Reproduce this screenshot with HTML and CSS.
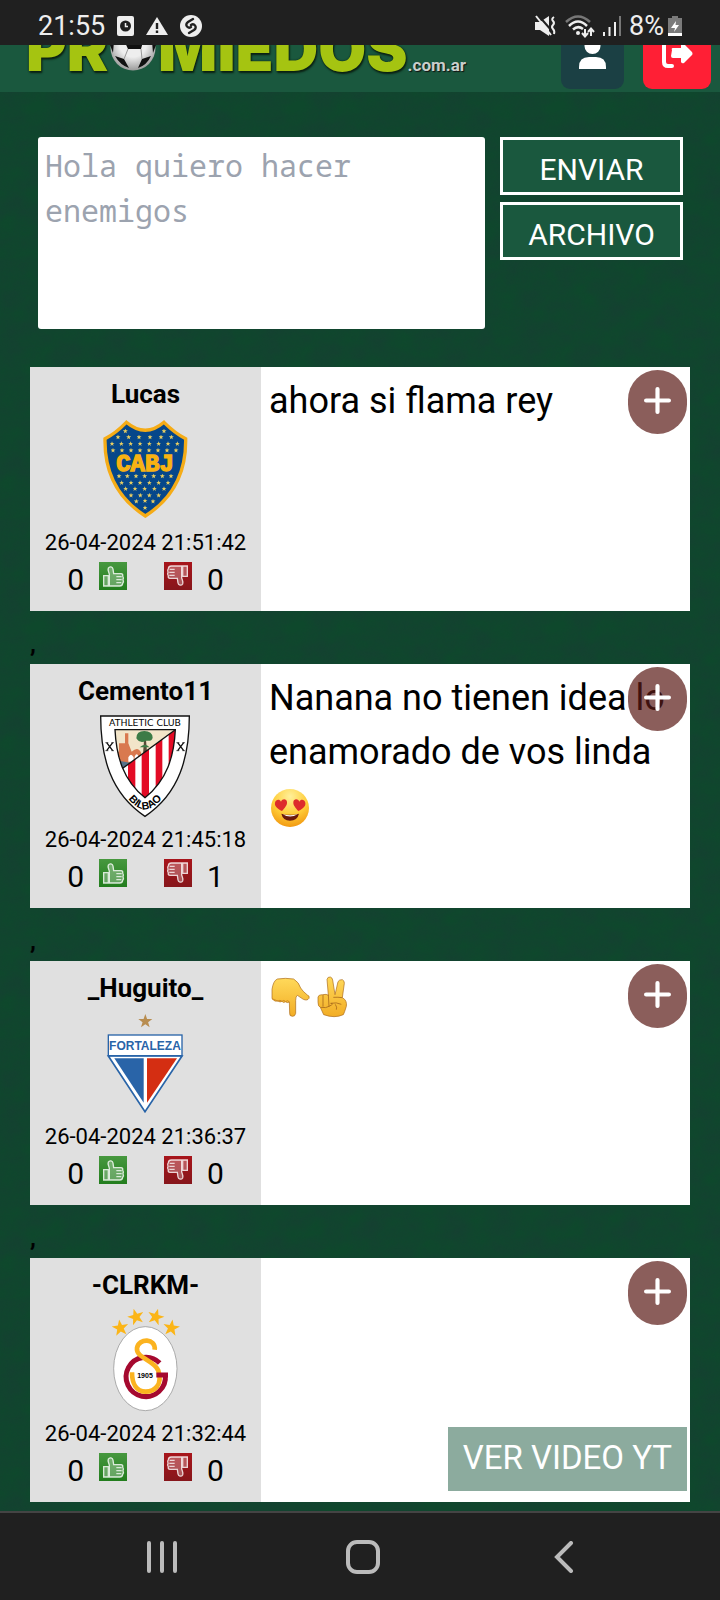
FILE: index.html
```html
<!DOCTYPE html>
<html lang="es">
<head>
<meta charset="utf-8">
<meta name="viewport" content="width=device-width, initial-scale=1">
<title>Promiedos - Chat</title>
<link rel="stylesheet" href="styles.css">
</head>
<body>
<svg class="defs" aria-hidden="true">
  <defs>
    <linearGradient id="green" x1="0" y1="0" x2="0" y2="1"><stop offset="0" stop-color="#47983f"/><stop offset="1" stop-color="#227d1d"/></linearGradient>
    <linearGradient id="red" x1="0" y1="0" x2="0" y2="1"><stop offset="0" stop-color="#a8151b"/><stop offset="1" stop-color="#86161b"/></linearGradient>
    <radialGradient id="face" cx=".5" cy=".2" r=".85"><stop offset="0" stop-color="#fff09a"/><stop offset=".55" stop-color="#ffcd38"/><stop offset="1" stop-color="#f0920c"/></radialGradient>
    <linearGradient id="skin" x1="0" y1="0" x2="0" y2="1"><stop offset="0" stop-color="#ffd95a"/><stop offset="1" stop-color="#f2ad25"/></linearGradient>
    <marker id="dot" viewBox="-10 -10 20 20" markerWidth="15" markerHeight="15" markerUnits="userSpaceOnUse"><path d="M0-10L2.500-3H10L4 1.500L6 9L0 4.500L-6 9L-4 1.500L-10-3H-2.500Z" fill="#e9cf62"/></marker>
  </defs>
  <symbol id="star" viewBox="-10 -10 20 20"><path d="M0-10L2.400-3.200H9.600L3.800 1.200L5.900 8.100L0 4L-5.900 8.100L-3.800 1.200L-9.600-3.200H-2.400Z"/></symbol>
  <symbol id="plus" viewBox="0 0 26 26"><path d="M13 2V24M2 13H24" fill="none" stroke="#fff" stroke-width="4" stroke-linecap="round"/></symbol>
  <symbol id="hand" viewBox="0 0 84 84">
    <path d="M14 41H28V72H14ZM31 41C33 33 24 27 28 18C32 12 41 14 42 21L44 35H66Q73 36 71 42Q75 48 72 53Q75 59 71 64Q70 72 62 72H31Z" fill="#fff" fill-opacity=".28" stroke="#fff" stroke-opacity=".8" stroke-width="4"/>
    <path d="M52 44H68M52 53H68M52 62H67" stroke="#fff" stroke-opacity=".75" stroke-width="4"/>
  </symbol>
  <symbol id="like" viewBox="0 0 84 84"><rect width="84" height="84" fill="url(#green)"/><use href="#hand"/></symbol>
  <symbol id="dislike" viewBox="0 0 84 84"><rect width="84" height="84" fill="url(#red)"/><use href="#hand" transform="rotate(180 42 42)"/></symbol>
</svg>

<div class="statusbar">
  <div class="status-group">
    <span class="clock">21:55</span>
    <svg width="17" height="20" viewBox="0 0 17 20"><rect width="17" height="20" rx="2" fill="#eee"/><circle cx="8.500" cy="10" r="5.500" fill="#202020"/><path d="M8.500 7V10.500H11" stroke="#eee" stroke-width="1.500" fill="none"/></svg>
    <svg width="22" height="20" viewBox="0 0 22 20"><path d="M11 1L22 19H0Z" fill="#eee"/><path d="M11 7V13M11 14.500V17" stroke="#202020" stroke-width="2.400"/></svg>
    <svg width="22" height="22" viewBox="0 0 22 22"><circle cx="11" cy="11" r="11" fill="#eee"/><path d="M13 4L8 7C4 10 8 14 11 12M9 18L14 15C18 12 14 8 11 10" fill="none" stroke="#202020" stroke-width="2.400" stroke-linecap="round"/></svg>
  </div>
  <div class="status-group status-right">
    <svg width="22" height="22" viewBox="0 0 22 22"><path d="M0 7H5L14 1V21L5 15H0Z" fill="#eee"/><path d="M3 0L17 16" stroke="#202020" stroke-width="2"/><path d="M1 1L16 20" stroke="#eee" stroke-width="2"/><path d="M19 2Q16 4 18 6T18 10T18 14T19 19" fill="none" stroke="#eee" stroke-width="2"/></svg>
    <svg width="30" height="23" viewBox="0 0 30 23"><path d="M1 7Q13-4 25 7" fill="none" stroke="#777" stroke-width="2.500"/><path d="M4 11Q13 2 22 11M8 14.500Q13 10 18 14" fill="none" stroke="#eee" stroke-width="2.500"/><circle cx="13" cy="18" r="2" fill="#eee"/><path d="M20 14V21M17 18L20 21.500L23 18M26 21V14M23 17L26 13.500L29 17" fill="none" stroke="#eee" stroke-width="2"/></svg>
    <svg width="18" height="20" viewBox="0 0 18 20"><path d="M1 16V20M6.500 11V20M12 6V20" stroke="#eee" stroke-width="2"/><path d="M17 0V20" stroke="#777" stroke-width="2"/></svg>
    <span class="battery">8%</span>
    <svg width="14" height="20" viewBox="0 0 14 20"><path d="M4 0H10V2H14V20H0V2H4Z" fill="#7b7b7b"/><path d="M0 17H14V20H0ZM8 5L3 12H7L6 16L11 9H7.500Z" fill="#fff"/></svg>
  </div>
</div>

<header class="header">
  <a class="logo" href="#" aria-label="Promiedos.com.ar">
    <span class="logo-word">PR</span>
    <svg class="ball" viewBox="0 0 46 46"><defs><radialGradient id="ballg" cx=".5" cy=".4" r=".6"><stop offset=".5" stop-color="#eee"/><stop offset="1" stop-color="#9a9a9a"/></radialGradient></defs><circle cx="23" cy="23" r="22.500" fill="url(#ballg)"/><path d="M13 13L23 8L34 13L31 24H18ZM5 31L14 34L19 43Q10 40 5 31ZM41 31L32 34L28 43Q37 40 41 31ZM0 20L4 16L3 28ZM46 20L42 16L43 28Z" fill="#111"/><path d="M18 24L14 34M31 24L32 34M4 16L13 13M42 16L34 13" stroke="#999"/></svg>
    <span class="logo-word">MIEDOS</span>
    <span class="logo-tld">.com.ar</span>
  </a>
  <div class="header-actions">
    <button class="icon-button user" aria-label="Usuario"><svg width="27" height="34" viewBox="0 0 27 34"><circle cx="13.500" cy="11" r="8" fill="#fff"/><path d="M0 34V32Q0 22 10 22H17Q27 22 27 32V34Z" fill="#fff"/></svg></button>
    <button class="icon-button logout" aria-label="Salir"><svg width="32" height="34" viewBox="0 0 32 34"><path d="M12 6H8Q3 6 3 11V27Q3 31 7 31H11" fill="none" stroke="#fff" stroke-width="4" stroke-linecap="round"/><path d="M11 15Q10 13 12 13H20V9Q21 7 23 9L31 17Q32 19 31 20L23 28Q21 29 20 27V23H12Q10 23 10 21Z" fill="#fff"/></svg></button>
  </div>
</header>

<main class="main">
  <form class="composer">
    <textarea class="message" aria-label="Mensaje" placeholder="Hola quiero hacer enemigos"></textarea>
    <div class="composer-actions">
      <button class="button" type="button">ENVIAR</button>
      <button class="button" type="button">ARCHIVO</button>
    </div>
  </form>

  <article class="post">
    <div class="author">
      <h2 class="name">Lucas</h2>
      <svg class="badge" viewBox="229 171 300 312" role="img" aria-label="Boca Juniors">
        <path d="M320 187Q377 235 433 187Q466 220 498 236C500 345 455 418 377 468C299 418 254 345 256 236Q288 220 320 187Z" fill="#06478a" stroke="#f5ac17" stroke-width="10"/>
        <g fill="none"><path marker-start="url(#dot)" marker-mid="url(#dot)" marker-end="url(#dot)" d="M317 213L433 213L455 231L424 231L391 231L358 231L327 231L295 231L277 251L305 251L333 251L361 251L389 251L417 251L445 251L473 251L469 271L442 271L415 271L388 271L361 271L334 271L307 271L280 271M298 348L323 348L349 348L375 348L402 348L428 348L454 348L445 368L417 368L389 368L361 368L334 368L306 368L318 386L346 386L375 386L404 386L433 386L417 406L389 406L362 406L334 406L350 424L376 422L400 424L376 443"/></g>
        <text x="376" y="333" text-anchor="middle" class="boca">CABJ</text>
      </svg>
      <time class="date">26-04-2024 21:51:42</time>
      <div class="votes">
        <div class="vote"><span>0</span><button aria-label="Me gusta"><svg width="28" height="28"><use href="#like"/></svg></button></div>
        <div class="vote"><button aria-label="No me gusta"><svg width="28" height="28"><use href="#dislike"/></svg></button><span>0</span></div>
      </div>
    </div>
    <p class="text">ahora si flama rey</p>
    <button class="more" aria-label="Más"><svg width="27" height="27"><use href="#plus"/></svg></button>
  </article>
  <div class="separator">,</div>

  <article class="post">
    <div class="author">
      <h2 class="name">Cemento11</h2>
      <svg class="badge" viewBox="229 162 300 312" role="img" aria-label="Athletic Club Bilbao">
        <defs><clipPath id="inner"><path d="M286 209H467C463 290 442 360 376 413C310 360 290 290 286 209Z"/></clipPath><path id="arc" d="M308 388Q340 446 376 448Q412 446 446 388"/></defs>
        <path d="M243 168H509C509 290 480 400 376 469C272 400 243 290 243 168Z" fill="#fff" stroke="#111" stroke-width="4"/>
        <g clip-path="url(#inner)">
          <path d="M280 200H480V420H280Z" fill="#f2e5c9"/>
          <path d="M290 275H298V250H316V220H326V250L336 275Q355 258 364 278V310H290Z" fill="#d9794f"/>
          <path d="M326 305V292Q334 276 342 292V305ZM345 300V290Q351 276 357 290V300Z" fill="#fff"/>
          <path d="M285 300L330 308L310 330H285Z" fill="#56728a"/>
          <path d="M370 285L373 240H379L382 275Z" fill="#574a38"/>
          <path d="M350 235Q350 213 374 213Q398 213 399 233Q396 245 380 242Q360 252 350 235ZM360 262Q376 246 390 262Z" fill="#3c7b46"/>
          <path d="M305 328L470 207V420H305Z" fill="#fff"/>
          <path d="M325 314L347 298V420H325ZM366 284L388 267V420H366ZM408 253L428 238V420H408ZM447 224L469 208V420H447Z" fill="#e30b25"/>
          <path d="M305 328L470 207" stroke="#111" stroke-width="4"/>
        </g>
        <path d="M286 209H467C463 290 442 360 376 413C310 360 290 290 286 209Z" fill="none" stroke="#111" stroke-width="4"/>
        <text x="376" y="198" text-anchor="middle" class="bilbao-top">ATHLETIC CLUB</text>
        <text class="bilbao-name"><textPath href="#arc" startOffset="50%" text-anchor="middle">BILBAO</textPath></text>
        <path d="M261 248L279 272M279 248L261 272M474 248L492 272M492 248L474 272" stroke="#111" stroke-width="4"/>
        <path d="M257 248H266M275 248H283M257 272H266M275 272H283M470 248H479M488 248H496M470 272H479M488 272H496" stroke="#111" stroke-width="2"/>
      </svg>
      <time class="date">26-04-2024 21:45:18</time>
      <div class="votes">
        <div class="vote"><span>0</span><button aria-label="Me gusta"><svg width="28" height="28"><use href="#like"/></svg></button></div>
        <div class="vote"><button aria-label="No me gusta"><svg width="28" height="28"><use href="#dislike"/></svg></button><span>1</span></div>
      </div>
    </div>
    <p class="text">Nanana no tienen idea lo enamorado de vos linda <svg class="emoji" viewBox="27 407 126 126" role="img" aria-label="😍"><circle cx="90" cy="470" r="57" fill="url(#face)"/><path d="M64 487Q90 494 117 487Q112 508 90 508Q69 508 64 487Z" fill="#6b1a0c"/><path d="M68 489Q90 495 113 489Q90 502 68 489Z" fill="#fff"/><path id="heart" d="M66 479C52 472 43 464 45 454C48 443 59 443 63 451C67 441 80 442 81 452C82 462 74 470 66 479Z" fill="#dd2c2c"/><use href="#heart" transform="translate(181 0) scale(-1 1)"/></svg></p>
    <button class="more" aria-label="Más"><svg width="27" height="27"><use href="#plus"/></svg></button>
  </article>
  <div class="separator">,</div>

  <article class="post">
    <div class="author">
      <h2 class="name">_Huguito_</h2>
      <svg class="badge" viewBox="229 180 300 312" role="img" aria-label="Fortaleza">
        <use href="#star" x="355" y="189" width="44" height="44" fill="#b88d50"/>
        <path d="M266 315H487L376 482Z" fill="#fff" stroke="#2964a8" stroke-width="5"/>
        <rect x="266" y="252" width="221" height="62" fill="#fff" stroke="#2964a8" stroke-width="4"/>
        <path d="M284 322H372V455Z" fill="#2964a8"/><path d="M382 322H472L382 455Z" fill="#d42e12"/>
        <text x="376" y="297" text-anchor="middle" class="fortaleza">FORTALEZA</text>
      </svg>
      <time class="date">26-04-2024 21:36:37</time>
      <div class="votes">
        <div class="vote"><span>0</span><button aria-label="Me gusta"><svg width="28" height="28"><use href="#like"/></svg></button></div>
        <div class="vote"><button aria-label="No me gusta"><svg width="28" height="28"><use href="#dislike"/></svg></button><span>0</span></div>
      </div>
    </div>
    <p class="text"><svg class="emoji" viewBox="27 42 126 126" role="img" aria-label="👇"><path d="M36 110V82Q40 56 52 51Q76 47 101 51Q117 61 122 78Q128 88 142 99Q150 102 147 109Q142 117 130 112L112 100Q107 103 107 115V154Q105 164 97 163Q88 163 89 153L88 120Q81 124 77 119Q70 124 66 118Q60 122 54 117Q45 121 36 110Z" fill="url(#skin)" stroke="#a96818" stroke-width="2"/><path d="M36 110Q45 114 54 117Q60 112 66 118Q72 112 77 119Q83 112 88 120" fill="none" stroke="#d08d27" stroke-width="3"/></svg><svg class="emoji" viewBox="153 42 126 126" role="img" aria-label="✌"><path d="M205 100L201 52Q203 44 211 45Q217 47 218 54L225 98L234 59Q238 52 247 53Q254 57 253 64L247 107Q262 115 259 133Q253 153 250 158Q224 170 191 158L181 136Q174 134 174 121V105Q176 97 188 98Q200 95 205 100Z" fill="url(#skin)" stroke="#a96818" stroke-width="2"/><path d="M189 99V134M205 98L207 134M181 136Q200 139 207 133Q224 125 213 124M220 106Q234 105 247 107M211 124Q230 120 244 127M226 127Q232 136 229 143" fill="none" stroke="#aa6b1c" stroke-width="2.500"/></svg></p>
    <button class="more" aria-label="Más"><svg width="27" height="27"><use href="#plus"/></svg></button>
  </article>
  <div class="separator">,</div>

  <article class="post">
    <div class="author">
      <h2 class="name">-CLRKM-</h2>
      <svg class="badge" viewBox="227 174 300 312" role="img" aria-label="Galatasaray">
        <g fill="#fbb517"><use href="#star" x="-26" y="-26" width="52" height="52" transform="translate(300 234) rotate(-8)"/><use href="#star" x="-26" y="-26" width="52" height="52" transform="translate(347 201) rotate(-16)"/><use href="#star" x="-26" y="-26" width="52" height="52" transform="translate(406 201) rotate(16)"/><use href="#star" x="-26" y="-26" width="52" height="52" transform="translate(453 234) rotate(8)"/></g>
        <ellipse cx="375" cy="356" rx="95" ry="126" fill="#fff" stroke="#888" stroke-width="2"/>
        <path d="M418 339A59 59 0 1 0 435 375" fill="none" stroke="#a5092f" stroke-width="15"/>
        <path d="M403 299C407 264 356 263 350 294C346 325 402 329 414 362C428 405 402 425 376 425C348 425 335 400 335 367" fill="none" stroke="#fbb320" stroke-width="14"/>
        <path d="M408 375H443" stroke="#a5092f" stroke-width="15"/>
        <text x="374" y="383" text-anchor="middle" class="gala">1905</text>
      </svg>
      <time class="date">26-04-2024 21:32:44</time>
      <div class="votes">
        <div class="vote"><span>0</span><button aria-label="Me gusta"><svg width="28" height="28"><use href="#like"/></svg></button></div>
        <div class="vote"><button aria-label="No me gusta"><svg width="28" height="28"><use href="#dislike"/></svg></button><span>0</span></div>
      </div>
    </div>
    <p class="text"></p>
    <button class="more" aria-label="Más"><svg width="27" height="27"><use href="#plus"/></svg></button>
    <button class="video">VER VIDEO YT</button>
  </article>
</main>

<nav class="navbar" aria-label="Sistema">
  <button aria-label="Recientes"><svg width="30" height="32" viewBox="0 0 30 32"><path d="M2 2V30M15 2V30M28 2V30" stroke="#bbb" stroke-width="4" stroke-linecap="round"/></svg></button>
  <button aria-label="Inicio"><svg width="34" height="34" viewBox="0 0 34 34"><rect x="2" y="2" width="30" height="30" rx="9" fill="none" stroke="#bbb" stroke-width="4"/></svg></button>
  <button aria-label="Atrás"><svg width="20" height="32" viewBox="0 0 20 32"><path d="M17 2L3 16L17 30" fill="none" stroke="#bbb" stroke-width="4" stroke-linecap="round"/></svg></button>
</nav>
</body>
</html>
```
FILE: styles.css
```css
* {
  box-sizing: border-box;
}

body {
  margin: 0;
  min-height: 100vh;
  display: flex;
  flex-direction: column;
  font-family: Roboto, "Liberation Sans", sans-serif;
  color: #000;
  background-color: #0e482c;
  background-image: url("data:image/svg+xml,%3Csvg xmlns='http://www.w3.org/2000/svg' width='260' height='260'%3E%3Cfilter id='n' x='0' y='0' width='1' height='1' color-interpolation-filters='sRGB'%3E%3CfeTurbulence type='fractalNoise' baseFrequency='.04 .05' numOctaves='4' stitchTiles='stitch'/%3E%3CfeColorMatrix values='0 0 0 0 .09 0 0 0 0 .24 0 0 0 0 .2 1 0 0 0 -.2'/%3E%3C/filter%3E%3Crect width='260' height='260' filter='url(%23n)'/%3E%3C/svg%3E");
}

button {
  padding: 0;
  border: 0;
  background: none;
  font: inherit;
  color: inherit;
}

.defs {
  position: absolute;
  width: 0;
  height: 0;
}

.statusbar {
  display: flex;
  justify-content: space-between;
  align-items: center;
  height: 45px;
  padding: 7px 38px 0;
  background: #202020;
  color: #eee;
  font-size: 27px;
}

.status-group {
  display: flex;
  align-items: center;
  gap: 12px;
}

.status-right {
  gap: 8px;
}

.battery {
  margin-right: -4px;
}

.header {
  display: flex;
  justify-content: space-between;
  align-items: flex-end;
  height: 47px;
  padding: 0 9px 3px 26px;
  overflow: hidden;
  background: #1a583e;
}

.logo {
  display: flex;
  align-items: baseline;
  padding-bottom: 14px;
  text-decoration: none;
}

.logo-word {
  font: 900 62px/44px Inter, sans-serif;
  color: #a5c411;
  text-shadow: 1px 2px 2px #0a2012, 0 0 2px #0a2012;
}

.ball {
  width: 46px;
  height: 46px;
  margin: 0 2px;
}

.logo-tld {
  font-size: 17px;
  font-weight: 700;
  color: #c9cfcc;
  text-shadow: 1px 1px 1px #111;
}

.header-actions {
  display: flex;
  gap: 19px;
}

.icon-button {
  display: flex;
  justify-content: center;
  align-items: flex-end;
  width: 63px;
  height: 66px;
  padding-bottom: 20px;
  border-radius: 9px;
}

.user {
  background: #1b4044;
}

.logout {
  width: 68px;
  background: #ff1f35;
}

.main {
  flex: 1;
  padding: 45px 30px 9px;
}

.composer {
  display: flex;
  gap: 15px;
  padding: 0 7px 0 8px;
  margin-bottom: 38px;
}

.message {
  flex: 1;
  min-width: 0;
  height: 192px;
  padding: 6px 7px;
  border: 0;
  border-radius: 3px;
  background: #fff;
  font: 30px/45px "Noto Sans Mono", "DejaVu Sans Mono", monospace;
  resize: none;
}

.message::placeholder {
  color: #9ca3af;
  opacity: 1;
}

.composer-actions {
  display: flex;
  flex-direction: column;
  gap: 7px;
  width: 183px;
}

.button {
  height: 58px;
  padding-top: 6px;
  border: 3px solid #fff;
  background: #1a583e;
  color: #fff;
  font-size: 30px;
}

.post {
  position: relative;
  display: flex;
  background: #fff;
}

.author {
  display: flex;
  flex-direction: column;
  align-items: center;
  width: 35%;
  padding: 9px 0 13px;
  background: #e0e0e0;
}

.name {
  margin: 0 0 5px;
  font-size: 26px;
  line-height: 36px;
}

.badge {
  width: 100px;
  height: 104px;
  margin-bottom: 6px;
}

.boca {
  font: 700 72px "Liberation Mono", monospace;
  fill: #f8b212;
  stroke: #f8b212;
  stroke-width: 4px;
}

.bilbao-top {
  font: 28px "DejaVu Sans", sans-serif;
}

.bilbao-name {
  font: 700 32px "Liberation Sans", sans-serif;
}

.fortaleza {
  font: 700 36px "Liberation Sans", sans-serif;
  fill: #2964a8;
}

.gala {
  font: 700 21px "Liberation Sans", sans-serif;
}

.date {
  font-size: 22px;
  line-height: 32px;
}

.votes {
  display: flex;
  align-items: baseline;
  gap: 37px;
  padding-top: 3px;
  font-size: 30px;
  line-height: 36px;
}

.vote {
  display: flex;
  align-items: baseline;
  gap: 15px;
}

.vote button {
  display: flex;
}

.text {
  flex: 1;
  min-width: 0;
  margin: 0;
  padding: 7px 8px;
  font-size: 36px;
  line-height: 54px;
}

.emoji {
  width: 42px;
  height: 42px;
  vertical-align: middle;
}

.more {
  position: absolute;
  top: 3px;
  right: 3px;
  display: flex;
  justify-content: center;
  align-items: center;
  width: 59px;
  height: 64px;
  padding-bottom: 4px;
  border-radius: 30px;
  background: rgba(90, 25, 22, 0.7);
}

.video {
  position: absolute;
  right: 3px;
  bottom: 11px;
  height: 64px;
  padding: 0 15px 4px;
  background: #8cab9e;
  color: #fff;
  font-size: 33px;
}

.separator {
  display: flex;
  align-items: flex-end;
  height: 53px;
  font-size: 24px;
  font-weight: 700;
  line-height: 40px;
}

.navbar {
  display: grid;
  grid-template-columns: repeat(3, 1fr);
  height: 90px;
  padding: 0 56px 0 62px;
  border-top: 2px solid #444;
  background: #202020;
}

.navbar button {
  display: flex;
  justify-content: center;
  align-items: center;
}
```
